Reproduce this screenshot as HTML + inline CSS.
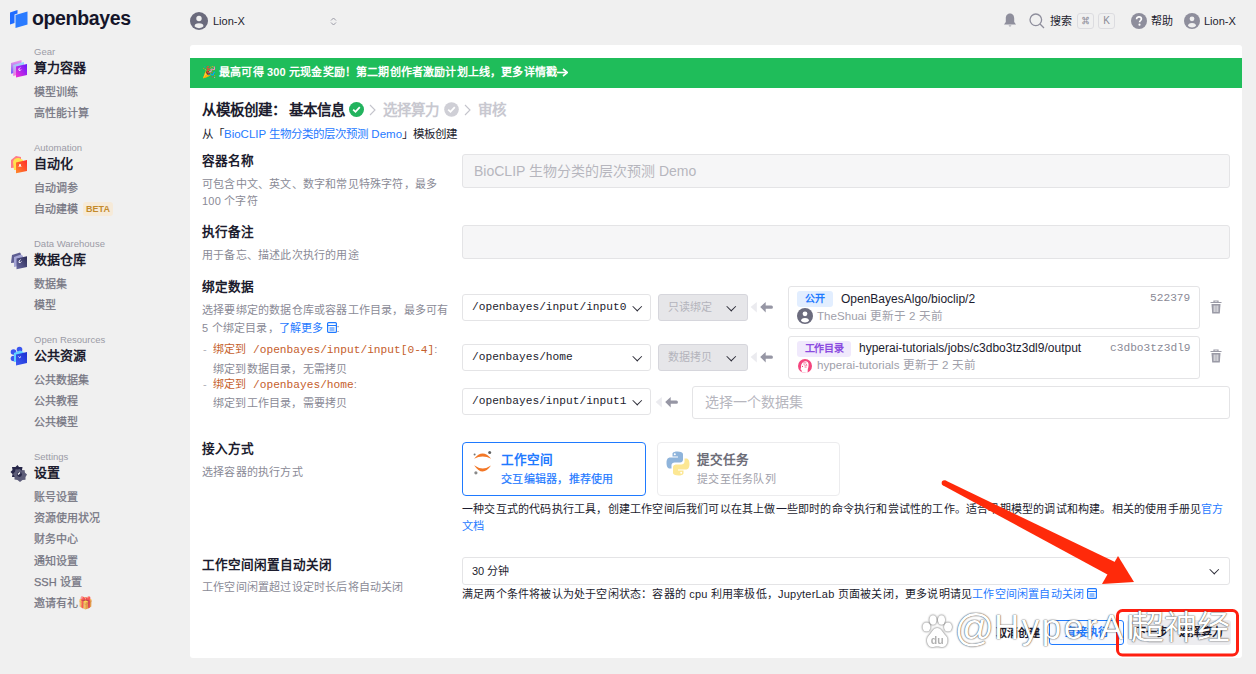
<!DOCTYPE html>
<html lang="zh-CN"><head><meta charset="utf-8">
<style>
*{box-sizing:border-box;margin:0;padding:0}
html,body{width:1256px;height:674px;overflow:hidden;background:#f0f0f0;font-family:"Liberation Sans",sans-serif;color:#1d1d2b}
.a{position:absolute;white-space:nowrap}
.sl{font-size:9.5px;line-height:12px;color:#9b9ba6;letter-spacing:0}
.sh{font-size:13px;line-height:16px;font-weight:bold;color:#1c1c2e}
.si{font-size:11px;line-height:14px;color:#757582;-webkit-text-stroke:0.25px #757582}
.card{position:absolute;left:190px;top:45px;width:1052px;height:613px;background:#fff;border-radius:3px}
.lab{font-size:12.6px;line-height:16px;font-weight:bold;color:#1c1c2e}
.desc{font-size:11px;line-height:18px;color:#8a8a96;letter-spacing:0.2px;margin-top:1px}
.box{position:absolute;border:1px solid #e4e4e6;border-radius:3px;background:#fff}
.mono{font-family:"Liberation Mono",monospace}
.chev{position:absolute;width:6.5px;height:6.5px;border-right:1.6px solid #2a2a36;border-bottom:1.6px solid #2a2a36;transform:rotate(45deg)}
.ph{font-size:14px;line-height:18px;color:#b6b6be}
</style></head>
<body>
<!-- logo -->
<svg class="a" style="left:10px;top:9px" width="18" height="20" viewBox="0 0 18 20">
<path d="M0 3.5 L7.5 1 V4.5 L4.5 5.5 V14 L0 15.5Z" fill="#1f6bff"/>
<path d="M5.5 6 L17.5 2.5 V15.5 L5.5 19Z" fill="#2a7bff"/>
</svg>
<div class="a" style="left:32px;top:5.5px;font-size:19.5px;line-height:24px;font-weight:bold;color:#15152a;letter-spacing:-0.35px">openbayes</div>

<!-- sidebar -->
<div class="a sl" style="left:34px;top:45px;margin-top:1px">Gear</div>
<div class="a sh" style="left:34px;top:60px">算力容器</div>
<div class="a si" style="left:34px;top:85px">模型训练</div>
<div class="a si" style="left:34px;top:106px">高性能计算</div>

<div class="a sl" style="left:34px;top:141px;margin-top:1px">Automation</div>
<div class="a sh" style="left:34px;top:156px">自动化</div>
<div class="a si" style="left:34px;top:181px">自动调参</div>
<div class="a si" style="left:34px;top:202px">自动建模</div>
<div class="a" style="left:83px;top:202px;width:30px;height:14px;background:#f6ead8;border-radius:3px;color:#c48a2c;font-size:9px;line-height:14px;text-align:center;font-weight:bold">BETA</div>

<div class="a sl" style="left:34px;top:237px;margin-top:1px">Data Warehouse</div>
<div class="a sh" style="left:34px;top:252px">数据仓库</div>
<div class="a si" style="left:34px;top:277px">数据集</div>
<div class="a si" style="left:34px;top:298px">模型</div>

<div class="a sl" style="left:34px;top:333px;margin-top:1px">Open Resources</div>
<div class="a sh" style="left:34px;top:348px">公共资源</div>
<div class="a si" style="left:34px;top:373px">公共数据集</div>
<div class="a si" style="left:34px;top:394px">公共教程</div>
<div class="a si" style="left:34px;top:415px">公共模型</div>

<div class="a sl" style="left:34px;top:450px;margin-top:1px">Settings</div>
<div class="a sh" style="left:34px;top:465px">设置</div>
<div class="a si" style="left:34px;top:490px">账号设置</div>
<div class="a si" style="left:34px;top:511px">资源使用状况</div>
<div class="a si" style="left:34px;top:532px">财务中心</div>
<div class="a si" style="left:34px;top:554px">通知设置</div>
<div class="a si" style="left:34px;top:575px">SSH 设置</div>
<div class="a si" style="left:34px;top:596px">邀请有礼</div>


<!-- sidebar icons -->
<svg class="a" style="left:6px;top:56px" width="26" height="26" viewBox="0 0 26 26">
<defs>
<linearGradient id="g1a" x1="0" y1="0" x2="0" y2="1"><stop offset="0" stop-color="#f59ae8"/><stop offset="1" stop-color="#6b5cff"/></linearGradient>
<linearGradient id="g1b" x1="0" y1="0" x2="0" y2="1"><stop offset="0" stop-color="#8fe0ff"/><stop offset="1" stop-color="#f66ee0"/></linearGradient>
<linearGradient id="g1c" x1="1" y1="0" x2="0" y2="1"><stop offset="0" stop-color="#6318ff"/><stop offset="1" stop-color="#f52fd6"/></linearGradient>
</defs>
<path d="M5 7 L15.5 4 V15 L5 17.8Z" fill="url(#g1a)"/>
<path d="M7.2 9 L18 6 V17 L7.2 20Z" fill="url(#g1b)"/>
<path d="M10 10.4 L21 7.9 V19 L10 21.6Z" fill="url(#g1c)"/>
<path d="M14.2 11.5 Q12 13 13 14.3 Q14.5 15 15 13.5" fill="none" stroke="#fff" stroke-width="0.9"/>
</svg>
<svg class="a" style="left:6px;top:152px" width="26" height="26" viewBox="0 0 26 26">
<defs>
<linearGradient id="g2c" x1="1" y1="0" x2="0" y2="1"><stop offset="0" stop-color="#ff2a2a"/><stop offset="1" stop-color="#ff8a2a"/></linearGradient>
</defs>
<path d="M5 8 L10 4 L15 5 V15 L5 16Z" fill="#ff7b86"/>
<path d="M7 10 Q8 5.5 13 6 L17 8 V18 L8 18Z" fill="#ffe24d"/>
<path d="M10 10.4 L21 7.9 V19 L10 21.3Z" fill="url(#g2c)"/>
<path d="M13 15 L14 12 L15 15" fill="none" stroke="#fff" stroke-width="0.9"/>
</svg>
<svg class="a" style="left:6px;top:248px" width="26" height="26" viewBox="0 0 26 26">
<defs>
<linearGradient id="g3c" x1="1" y1="0" x2="0" y2="1"><stop offset="0" stop-color="#2a2a55"/><stop offset="1" stop-color="#6a6aa2"/></linearGradient>
</defs>
<path d="M6 7 L14 4.5 L15 6 V14 L5 15Z" fill="#5e5e92"/>
<path d="M8 9 L15 6.5 L17 8 V17 L8 19Z" fill="#a6a6d6"/>
<path d="M10.5 10.6 L21 8.2 V19 L10.5 21.3Z" fill="url(#g3c)"/>
<path d="M14.5 11.5 Q12.5 13 13 14.5 Q14.5 15 15.5 13.5" fill="none" stroke="#fff" stroke-width="0.9"/>
</svg>
<svg class="a" style="left:6px;top:344px" width="26" height="26" viewBox="0 0 26 26">
<defs>
<linearGradient id="g4c" x1="1" y1="0" x2="0" y2="1"><stop offset="0" stop-color="#1b2fd0"/><stop offset="1" stop-color="#3e5cf4"/></linearGradient>
</defs>
<circle cx="7.5" cy="8" r="2.8" fill="#3b56f0"/>
<circle cx="13.5" cy="5.5" r="2.8" fill="#3b56f0"/>
<circle cx="7.5" cy="14.5" r="2.8" fill="#3b56f0"/>
<path d="M8 9 L14 6.5 L17.5 8 V17 L8 18Z" fill="#62d2ff"/>
<path d="M10 10.4 L21 7.9 V19 L10 21.6Z" fill="url(#g4c)"/>
<path d="M12.5 12.5 Q13.5 15 15 12.5" fill="none" stroke="#fff" stroke-width="0.9"/>
</svg>
<svg class="a" style="left:6px;top:460px" width="26" height="26" viewBox="0 0 26 26">
<path d="M11.5 5 L13 7 L16.5 7 L16 10 L18 12 L16 14 L16.5 17 L13 17 L11.5 19 L9.5 17 L6 17 L6.5 14 L4.5 12 L6.5 10 L6 7 L9.5 7Z" fill="#262648"/>
<path d="M13.5 9 L15.5 10.5 L18.5 10 L19 12.8 L21 14.5 L19.5 17 L19.5 19.8 L16.5 20 L14 22 L11.5 20 L8.5 19.5 L8.5 16.5 L7 14 L9 11.8 L9.5 9.2 L12 9.5Z" fill="#5c5c78"/>
<circle cx="13.5" cy="14.5" r="2.4" fill="#262648"/>
<path d="M12 14.5 L14 12.5" stroke="#fff" stroke-width="1.2"/>
</svg>
<div class="a" style="left:78px;top:595px;font-size:12px;line-height:16px;opacity:.75">🎁</div>

<!-- top bar left -->
<svg class="a" style="left:190px;top:12px" width="18" height="18" viewBox="0 0 18 18"><defs><clipPath id="avc1"><circle cx="9" cy="9" r="7.2"/></clipPath></defs><circle cx="9" cy="9" r="9" fill="#6b6b7d"/><circle cx="9" cy="6.5" r="2.7" fill="#f0f0f0"/><g clip-path="url(#avc1)"><ellipse cx="9" cy="14.6" rx="4.5" ry="3.3" fill="#f0f0f0"/></g></svg>
<div class="a" style="left:213px;top:14px;font-size:11px;line-height:14px;color:#1c1c2e">Lion-X</div>
<svg class="a" style="left:330px;top:17px" width="7" height="9" viewBox="0 0 7 9"><path d="M1 3.5 L3.5 1 L6 3.5 M1 5.5 L3.5 8 L6 5.5" fill="none" stroke="#9a9aa6" stroke-width="1"/></svg>

<!-- top bar right -->
<svg class="a" style="left:1003px;top:13px" width="14" height="15" viewBox="0 0 14 15"><path d="M7 0.5 C4 0.5 2.8 3 2.8 5.5 V9 L1 11.5 H13 L11.2 9 V5.5 C11.2 3 10 0.5 7 0.5Z" fill="#8e8e9c"/><path d="M5.5 12.5 Q7 14.5 8.5 12.5Z" fill="#8e8e9c"/></svg>
<svg class="a" style="left:1029px;top:13px" width="16" height="16" viewBox="0 0 16 16"><circle cx="6.8" cy="6.8" r="5.8" fill="none" stroke="#8e8e9c" stroke-width="1.3"/><path d="M11 11 L15 15" stroke="#8e8e9c" stroke-width="1.3"/></svg>
<div class="a" style="left:1050px;top:14px;font-size:11px;line-height:14px;color:#1c1c2e">搜索</div>
<div class="a" style="left:1077px;top:13px;width:17px;height:16px;border:1px solid #dcdce0;border-radius:3px;font-size:7px;line-height:14px;text-align:center;color:#8a8a96;font-weight:bold">⌘</div>
<div class="a" style="left:1098px;top:13px;width:17px;height:16px;border:1px solid #dcdce0;border-radius:3px;font-size:10px;line-height:14px;text-align:center;color:#8a8a96">K</div>
<svg class="a" style="left:1131px;top:13px" width="16" height="16" viewBox="0 0 16 16"><circle cx="8" cy="8" r="8" fill="#8e8e9c"/><path d="M5.6 6.2 C5.6 4.6 6.8 3.8 8 3.8 C9.4 3.8 10.4 4.7 10.4 5.9 C10.4 7.4 8.6 7.6 8.6 9.2" fill="none" stroke="#fff" stroke-width="1.7"/><circle cx="8.5" cy="11.7" r="1.1" fill="#fff"/></svg>
<div class="a" style="left:1151px;top:14px;font-size:11px;line-height:14px;color:#1c1c2e">帮助</div>
<svg class="a" style="left:1184px;top:13px" width="16" height="16" viewBox="0 0 18 18"><defs><clipPath id="avc2"><circle cx="9" cy="9" r="7.2"/></clipPath></defs><circle cx="9" cy="9" r="9" fill="#8e8e9c"/><circle cx="9" cy="6.5" r="2.7" fill="#f0f0f0"/><g clip-path="url(#avc2)"><ellipse cx="9" cy="14.6" rx="4.5" ry="3.3" fill="#f0f0f0"/></g></svg>
<div class="a" style="left:1204px;top:14px;font-size:11px;line-height:14px;color:#1c1c2e">Lion-X</div>

<!-- card -->
<div class="card"></div>
<div class="a" style="left:190px;top:58px;width:1052px;height:30px;background:#1fbd5a"></div>
<div class="a" style="left:201.5px;top:65px;font-size:11.5px;line-height:15px">🎉</div>
<div id="ban" class="a" style="left:219px;top:65px;font-size:11px;line-height:14px;color:#fff;font-weight:bold;letter-spacing:0.17px">最高可得 300 元现金奖励！第二期创作者激励计划上线，更多详情戳</div><svg class="a" style="left:557px;top:68px" width="11" height="9" viewBox="0 0 11 9"><path d="M0 4.5 H9" stroke="#fff" stroke-width="1.6"/><path d="M6 1 L10.5 4.5 L6 8" fill="none" stroke="#fff" stroke-width="1.6"/></svg>

<div class="a" style="left:202px;top:101px;font-size:14.5px;line-height:18px;font-weight:bold;color:#1c1c2e">从模板创建：<span style="margin-left:3px">基本信息</span></div>
<svg class="a" style="left:348.5px;top:101.5px" width="15" height="15" viewBox="0 0 15 15"><circle cx="7.5" cy="7.5" r="7.5" fill="#22b35e"/><path d="M4.2 7.6 L6.5 9.8 L10.8 5.2" fill="none" stroke="#fff" stroke-width="1.8"/></svg>
<svg class="a" style="left:369px;top:104px" width="7" height="12" viewBox="0 0 7 12"><path d="M1 1 L6 6 L1 11" fill="none" stroke="#c4c4cc" stroke-width="1.1"/></svg>
<div class="a" style="left:383px;top:101px;font-size:14.5px;line-height:18px;font-weight:bold;color:#c8c8d0">选择算力</div>
<svg class="a" style="left:444px;top:102px" width="15" height="15" viewBox="0 0 15 15"><circle cx="7.5" cy="7.5" r="7.3" fill="#cfcfd6"/><path d="M4.2 7.6 L6.5 9.8 L10.8 5.2" fill="none" stroke="#fff" stroke-width="1.8"/></svg>
<svg class="a" style="left:464px;top:104px" width="7" height="12" viewBox="0 0 7 12"><path d="M1 1 L6 6 L1 11" fill="none" stroke="#c4c4cc" stroke-width="1.1"/></svg>
<div class="a" style="left:478px;top:101px;font-size:14.5px;line-height:18px;font-weight:bold;color:#c8c8d0">审核</div>
<div class="a" style="left:202px;top:126px;font-size:11.5px;line-height:16px;color:#1c1c2e">从「<span style="color:#1f7aff">BioCLIP 生物分类的层次预测 Demo</span>」模板创建</div>

<!-- row 1 -->
<div class="a lab" style="left:202px;top:153px">容器名称</div>
<div class="a desc" style="left:202px;top:175px;white-space:normal;width:245px;line-height:17px">可包含中文、英文、数字和常见特殊字符，最多 100 个字符</div>
<div class="box" style="left:462px;top:154px;width:768px;height:34px;background:#f6f6f7"></div>
<div class="a ph" style="left:474px;top:162px">BioCLIP 生物分类的层次预测 Demo</div>

<!-- row 2 -->
<div class="a lab" style="left:202px;top:224px">执行备注</div>
<div class="a desc" style="left:202px;top:245px">用于备忘、描述此次执行的用途</div>
<div class="box" style="left:462px;top:225px;width:768px;height:34px;background:#f6f6f7"></div>

<!-- row 3 -->
<div class="a lab" style="left:202px;top:279px">绑定数据</div>
<div class="a desc" style="left:202px;top:300px">选择要绑定的数据仓库或容器工作目录，最多可有</div>
<div class="a desc" style="left:202px;top:318px">5 个绑定目录，<span style="color:#1f7aff">了解更多<svg style="display:inline-block;vertical-align:-1px;margin-left:3px" width="10" height="11" viewBox="0 0 10 11"><rect x="0.6" y="0.6" width="8.8" height="9.8" rx="1" fill="none" stroke="#1f7aff" stroke-width="1.2"/><path d="M0.6 3.5 H9.4 M2.5 6 H7.5 M2.5 8 H7.5" stroke="#1f7aff" stroke-width="1"/></svg></span>:</div>
<div class="a desc" style="left:203px;top:338.5px;color:#b0b0b8">-</div>
<div class="a" style="left:213px;top:340px;font-size:11px;line-height:18px;color:#c5602c">绑定到<span class="mono" style="margin-left:7px;font-size:11.2px">/openbayes/input/input[0-4]</span><span style="color:#8a8a96">:</span></div>
<div class="a desc" style="left:213px;top:359px">绑定到数据目录，无需拷贝</div>
<div class="a desc" style="left:203px;top:373.5px;color:#b0b0b8">-</div>
<div class="a" style="left:213px;top:375px;font-size:11px;line-height:18px;color:#c5602c">绑定到<span class="mono" style="margin-left:7px;font-size:11.2px">/openbayes/home</span><span style="color:#8a8a96">:</span></div>
<div class="a desc" style="left:213px;top:393px">绑定到工作目录，需要拷贝</div>

<!-- binding rows -->
<div class="box" style="left:462px;top:294px;width:189px;height:27px"></div>
<div class="a mono" style="left:472px;top:300px;font-size:11.2px;line-height:14px;color:#1c1c2e">/openbayes/input/input0</div>
<div class="chev" style="left:634px;top:303px"></div>
<div class="box" style="left:658px;top:294px;width:90px;height:27px;background:#e6e6e9;border-color:#d6d6dc"></div>
<div class="a" style="left:668px;top:300px;font-size:11px;line-height:14px;color:#b4b4bc">只读绑定</div>
<div class="chev" style="left:728px;top:303px"></div>

<div class="box" style="left:462px;top:344px;width:189px;height:27px"></div>
<div class="a mono" style="left:472px;top:350px;font-size:11.2px;line-height:14px;color:#1c1c2e">/openbayes/home</div>
<div class="chev" style="left:634px;top:353px"></div>
<div class="box" style="left:658px;top:344px;width:90px;height:27px;background:#e6e6e9;border-color:#d6d6dc"></div>
<div class="a" style="left:668px;top:350px;font-size:11px;line-height:14px;color:#b4b4bc">数据拷贝</div>
<div class="chev" style="left:728px;top:353px"></div>

<div class="box" style="left:462px;top:388px;width:189px;height:27px"></div>
<div class="a mono" style="left:472px;top:394px;font-size:11.2px;line-height:14px;color:#1c1c2e">/openbayes/input/input1</div>
<div class="chev" style="left:634px;top:397px"></div>

<!-- arrows -->
<svg class="a" style="left:750px;top:300px" width="24" height="14" viewBox="0 0 24 14"><path d="M0.6 7 L6.8 1.9 V12.4 Z" fill="#ebebef"/><path d="M10.2 7 L15.7 1.9 V5.6 H21.4 A1.55 1.55 0 0 1 21.4 8.7 H15.7 V12.4 Z" fill="#9696a4"/></svg>
<svg class="a" style="left:750px;top:350px" width="24" height="14" viewBox="0 0 24 14"><path d="M0.6 7 L6.8 1.9 V12.4 Z" fill="#ebebef"/><path d="M10.2 7 L15.7 1.9 V5.6 H21.4 A1.55 1.55 0 0 1 21.4 8.7 H15.7 V12.4 Z" fill="#9696a4"/></svg>
<svg class="a" style="left:655px;top:395px" width="24" height="14" viewBox="0 0 24 14"><path d="M0.6 7 L6.8 1.9 V12.4 Z" fill="#ebebef"/><path d="M10.2 7 L15.7 1.9 V5.6 H21.4 A1.55 1.55 0 0 1 21.4 8.7 H15.7 V12.4 Z" fill="#9696a4"/></svg>

<!-- dataset card 1 -->
<div class="box" style="left:788px;top:286px;width:412px;height:43px"></div>
<div class="a" style="left:797px;top:291px;width:36px;height:16px;background:#e2eeff;border-radius:3px;color:#1f7aff;font-size:10px;line-height:16px;font-weight:bold;text-align:center;letter-spacing:-0.4px">公开</div>
<div class="a" style="left:841px;top:292px;font-size:12px;line-height:14px;color:#1c1c2e">OpenBayesAlgo/bioclip/2</div>
<div class="a mono" style="left:1150px;top:291px;font-size:11.2px;line-height:14px;color:#8a8a96">522379</div>
<svg class="a" style="left:797px;top:308px" width="16" height="16" viewBox="0 0 18 18"><defs><clipPath id="avc3"><circle cx="9" cy="9" r="7.2"/></clipPath></defs><circle cx="9" cy="9" r="9" fill="#6b6b7d"/><circle cx="9" cy="6.5" r="2.7" fill="#fff"/><g clip-path="url(#avc3)"><ellipse cx="9" cy="14.6" rx="4.5" ry="3.3" fill="#fff"/></g></svg>
<div class="a" style="left:817px;top:309px;font-size:11.6px;line-height:14px;color:#a0a0aa">TheShuai 更新于 2 天前</div>

<!-- dataset card 2 -->
<div class="box" style="left:788px;top:335.5px;width:412px;height:43px"></div>
<div class="a" style="left:797px;top:341px;width:54px;height:16px;background:#f0e9fc;border-radius:3px;color:#8b4ae0;font-size:10px;line-height:16px;font-weight:bold;text-align:center;letter-spacing:-0.4px">工作目录</div>
<div class="a" style="left:859px;top:341px;font-size:12px;line-height:14px;color:#1c1c2e">hyperai-tutorials/jobs/c3dbo3tz3dl9/output</div>
<div class="a mono" style="left:1110px;top:341px;font-size:11.2px;line-height:14px;color:#8a8a96">c3dbo3tz3dl9</div>
<svg class="a" style="left:798px;top:358.7px" width="14" height="14" viewBox="0 0 14 14"><circle cx="7" cy="7" r="7" fill="#f4457e"/><path d="M4.2 13.6 C3.6 12.6 3.4 11.8 3.5 11.1 L2.4 10.3 L3.1 8.7 C2.6 5.4 4.7 2.3 7.6 2.3 C9.6 2.3 10.6 3.8 10.6 5.8 C10.6 7.6 10.2 9 9.8 10.2 L9.6 14Z" fill="#fff"/><path d="M5.2 3.9 H8.4 M5.8 5.2 L7.6 7 M8.2 5 L8.8 6.8 M6.6 8 L8.6 8.1" stroke="#f4457e" stroke-width="0.8"/><circle cx="4.5" cy="7.4" r="0.6" fill="#f4457e"/></svg>
<div class="a" style="left:817px;top:358px;font-size:11.6px;line-height:14px;color:#a0a0aa">hyperai-tutorials 更新于 2 天前</div>

<!-- trash -->
<svg class="a" style="left:1210px;top:300px" width="12" height="14" viewBox="0 0 12 14"><path d="M0.5 2.5 H11.5 M4 2.5 V1 H8 V2.5" fill="none" stroke="#9a9aa6" stroke-width="1.2"/><path d="M1.5 4 H10.5 L9.8 13.5 H2.2Z" fill="#9a9aa6"/><path d="M4.2 5.5 V12 M6 5.5 V12 M7.8 5.5 V12" stroke="#fff" stroke-width="0.8"/></svg>
<svg class="a" style="left:1210px;top:349px" width="12" height="14" viewBox="0 0 12 14"><path d="M0.5 2.5 H11.5 M4 2.5 V1 H8 V2.5" fill="none" stroke="#9a9aa6" stroke-width="1.2"/><path d="M1.5 4 H10.5 L9.8 13.5 H2.2Z" fill="#9a9aa6"/><path d="M4.2 5.5 V12 M6 5.5 V12 M7.8 5.5 V12" stroke="#fff" stroke-width="0.8"/></svg>

<!-- choose dataset -->
<div class="box" style="left:692px;top:386px;width:538px;height:33px"></div>
<div class="a ph" style="left:705px;top:393px">选择一个数据集</div>

<!-- access mode -->
<div class="a lab" style="left:202px;top:441px">接入方式</div>
<div class="a desc" style="left:202px;top:462px">选择容器的执行方式</div>
<div class="box" style="left:462px;top:442px;width:184px;height:54px;border:1.5px solid #1f7aff;border-radius:4px"></div>
<svg class="a" style="left:465px;top:445px" width="35" height="35" viewBox="0 0 35 35"><path d="M9.1 13.8 Q17.6 3.4 26.2 13.8 Q17.6 9.4 9.1 13.8Z" fill="#f37726"/><path d="M9.1 20.2 Q17.6 32.6 26 20.5 Q17.6 26.4 9.1 20.2Z" fill="#f37726"/><circle cx="24.7" cy="7.5" r="1.5" fill="#616262"/><circle cx="9.6" cy="9.6" r="1" fill="#767677"/><circle cx="10.9" cy="27.8" r="1.6" fill="#8a8a8a"/></svg>
<div class="a" style="left:501px;top:452px;font-size:12.6px;line-height:16px;font-weight:bold;color:#1f7aff">工作空间</div>
<div class="a" style="left:501px;top:471.5px;font-size:11px;line-height:15px;color:#1f7aff;letter-spacing:0.25px;-webkit-text-stroke:0.2px #1f7aff">交互编辑器，推荐使用</div>

<div class="box" style="left:657px;top:442px;width:183px;height:54px;border-color:#ececee;border-radius:4px"></div>
<svg class="a" style="left:666px;top:450.5px" width="24" height="25" viewBox="0 0 24 25"><path d="M11.5 0.5 C6 0.5 6.5 3 6.5 3 V5.5 H12 V6.5 H4 C4 6.5 0.5 6 0.5 12 C0.5 17.5 3.5 17.5 3.5 17.5 H5.5 V14.5 C5.5 14.5 5.5 11.5 8.5 11.5 H14 C14 11.5 17 11.5 17 8.5 V3.5 C17 3.5 17.5 0.5 11.5 0.5Z" fill="#8fb4db"/><circle cx="8.8" cy="3.2" r="1" fill="#fff"/><path d="M12.5 24.5 C18 24.5 17.5 22 17.5 22 V19.5 H12 V18.5 H20 C20 18.5 23.5 19 23.5 13 C23.5 7.5 20.5 7.5 20.5 7.5 H18.5 V10.5 C18.5 10.5 18.5 13.5 15.5 13.5 H10 C10 13.5 7 13.5 7 16.5 V21.5 C7 21.5 6.5 24.5 12.5 24.5Z" fill="#fce793"/><circle cx="15.2" cy="21.8" r="1" fill="#fff"/></svg>
<div class="a" style="left:697px;top:452px;font-size:12.6px;line-height:16px;font-weight:bold;color:#6d6d78">提交任务</div>
<div class="a" style="left:697px;top:471.5px;font-size:11px;line-height:15px;color:#a0a0aa;letter-spacing:0.25px">提交至任务队列</div>

<div class="a" style="left:462px;top:501px;font-size:11px;letter-spacing:0.2px;line-height:17px;color:#1c1c2e">一种交互式的代码执行工具，创建工作空间后我们可以在其上做一些即时的命令执行和尝试性的工作。适合早期模型的调试和构建。相关的使用手册见<span style="color:#1f7aff">官方</span></div>
<div class="a" style="left:462px;top:517.5px;font-size:11.2px;line-height:17px;color:#1f7aff">文档</div>

<!-- idle -->
<div class="a lab" style="left:202px;top:557px">工作空间闲置自动关闭</div>
<div class="a desc" style="left:202px;top:577px">工作空间闲置超过设定时长后将自动关闭</div>
<div class="box" style="left:462px;top:557px;width:768px;height:28px"></div>
<div class="a" style="left:472px;top:564px;font-size:11px;line-height:14px;color:#1c1c2e">30 分钟</div>
<div class="chev" style="left:1211px;top:566px"></div>
<div class="a" style="left:462px;top:586px;font-size:11px;letter-spacing:0.2px;line-height:16px;color:#1c1c2e">满足两个条件将被认为处于空闲状态：容器的 cpu 利用率极低，JupyterLab 页面被关闭，更多说明请见<span style="color:#1f7aff">工作空间闲置自动关闭<svg style="display:inline-block;vertical-align:-1px;margin-left:3px" width="10" height="11" viewBox="0 0 10 11"><rect x="0.6" y="0.6" width="8.8" height="9.8" rx="1" fill="none" stroke="#1f7aff" stroke-width="1.2"/><path d="M0.6 3.5 H9.4 M2.5 6 H7.5 M2.5 8 H7.5" stroke="#1f7aff" stroke-width="1"/></svg></span></div>

<!-- buttons -->
<div class="a" style="left:996px;top:626px;font-size:11px;line-height:14px;color:#1c1c2e;font-weight:bold">取消创建</div>
<div class="a" style="left:1049px;top:620px;width:75px;height:25px;border:1px solid #1f7aff;border-radius:3px;background:#f7faff;color:#1f7aff;font-size:11px;line-height:23px;text-align:center;font-weight:bold">直接执行</div>
<div class="a" style="left:1127px;top:620px;width:104px;height:25px;background:#ededf0;border-radius:3px;color:#1c1c2e;font-size:11px;line-height:25px;text-align:center;font-weight:bold">下一步：选择算力</div>

<!-- red annotations -->
<svg class="a" style="left:0;top:0" width="1256" height="674" viewBox="0 0 1256 674">
<path d="M945.6 480.6 L1116 562.6 L1109.3 575.4 L943.2 485.6 Z" fill="#ff2a0a"/>
<circle cx="944.4" cy="483.1" r="2.75" fill="#ff2a0a"/>
<path d="M1118 556 L1134 582 L1102 584 Z" fill="#ff2a0a"/>
<rect x="1117.5" y="610.5" width="120" height="44.5" rx="5" fill="none" stroke="#ff1f10" stroke-width="3"/>
</svg>

<!-- watermark -->
<svg class="a" style="left:919px;top:612px;filter:drop-shadow(0 0 1px rgba(0,0,0,.7))" width="36" height="36" viewBox="0 0 36 36">
<g fill="#fff">
<ellipse cx="7.5" cy="15" rx="4" ry="4.5"/>
<ellipse cx="14" cy="8" rx="3.6" ry="4.8"/>
<ellipse cx="22.5" cy="8" rx="3.6" ry="4.8"/>
<ellipse cx="29" cy="15" rx="4" ry="4.5"/>
<path d="M18.2 16 C14 16 12.5 21 9.5 24 C6.5 27 8 35 13 35 C15 35 16.5 34.5 18.2 34.5 C20 34.5 21.5 35 23.5 35 C28.5 35 30 27 27 24 C24 21 22.4 16 18.2 16Z"/>
</g>
<text x="18.2" y="32" font-size="10.5" font-family="Liberation Sans" font-weight="bold" fill="#b0b0b0" text-anchor="middle">du</text>
</svg>
<div class="a" style="left:956px;top:607px;font-size:35px;line-height:38px;color:#fff;letter-spacing:1px;text-shadow:0 0 1px rgba(0,0,0,.8),0 0 2px rgba(0,0,0,.45)"><span style="font-size:39px;position:relative;top:2px;letter-spacing:0;margin-left:-1.6px">@</span><span id="wm1" style="letter-spacing:2.5px">HyperAI</span><span id="wm2" style="letter-spacing:0;font-size:33px;margin-left:-7px">超神经</span></div>
</body></html>
